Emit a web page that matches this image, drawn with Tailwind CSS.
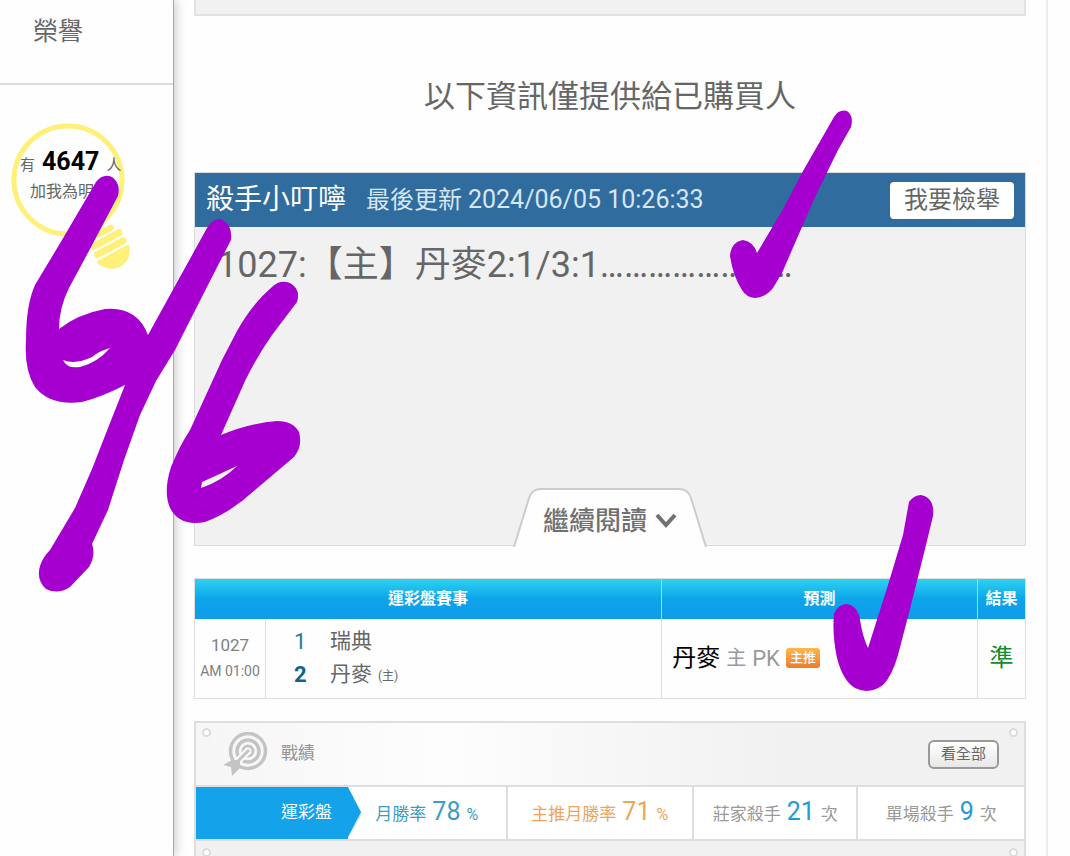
<!DOCTYPE html>
<html lang="zh-Hant">
<head>
    <meta charset="UTF-8">
    <meta name="viewport" content="width=device-width, initial-scale=1.0">
    <title>殺手小叮嚀</title>
    <script src="https://cdn.jsdelivr.net/npm/@tailwindcss/browser@4"></script>
</head>
<body class="relative flex h-screen overflow-hidden bg-[#fefefe] font-[Roboto,'Noto_Sans_CJK_TC',sans-serif] text-[#666]">
    <!-- Sidebar -->
    <aside class="z-10 w-[174px] shrink-0 border-r border-[#a8a8a8] bg-[#fefefe] shadow-[2px_0_10px_rgba(0,0,0,0.2)]">
        <a href="#honor" class="block border-b-2 border-[#dcdcdc] pt-3 pb-8 pl-[33px] text-[25px] leading-[39px]">榮譽</a>
        <div class="relative mt-[35px] ml-2 h-[152px] w-[124px]">
            <svg class="absolute inset-0" width="124" height="152" viewBox="8 120 124 152" fill="none" aria-hidden="true">
                <circle cx="68" cy="180" r="54" stroke="#fff07a" stroke-width="5"/>
                <g transform="rotate(-28 110 245)" fill="#fff07a">
                    <rect x="98" y="227" width="24" height="6" rx="3"/>
                    <rect x="92" y="235" width="35" height="7" rx="3"/>
                    <rect x="91" y="244" width="36" height="7" rx="3"/>
                    <path d="M92 253h33c2 0 2 2 1 4-3 7-9 12-17 12s-14-5-18-12c-1-2-1-4 1-4z"/>
                </g>
            </svg>
            <div class="relative pt-7 pl-3">
                <p class="flex items-baseline gap-1 text-[15px] leading-[28px]">有 <b class="px-[3px] text-[25px] text-black">4647</b> <span>人</span></p>
                <p class="pl-[10px] text-base leading-[26px]">加我為明燈</p>
            </div>
        </div>
    </aside>

    <!-- Main column -->
    <main class="mr-[22px] flex min-w-0 flex-1 flex-col border-r-2 border-[#ededed] px-5">
        <div class="h-4 shrink-0 border-2 border-t-0 border-[#e2e2e2] bg-[#f1f1f1]"></div>
        <h2 class="pt-14 text-center text-[31px] leading-[50px]">以下資訊僅提供給已購買人</h2>

        <!-- Paid tip -->
        <section class="relative mt-[50px] h-[374px] shrink-0 border border-[#dcdcdc] bg-[#f1f1f1]">
            <header class="flex h-[54px] items-center bg-[#306c9e] px-[11px]">
                <h3 class="text-[28px] text-white">殺手小叮嚀</h3>
                <span class="ml-5 text-2xl text-[#d6e6f5]">最後更新 <span class="text-[25px]">2024/06/05 10:26:33</span></span>
                <button type="button" class="ml-auto h-[37px] rounded-[4px] bg-white px-[14px] text-2xl">我要檢舉</button>
            </header>
            <p class="pt-3 pl-[22px] text-[36px] leading-[52px]">1027:【主】丹麥2:1/3:1……………………</p>
            <button type="button" class="absolute -bottom-[2px] left-1/2 flex h-[60px] w-[194px] -translate-x-1/2 items-center justify-center gap-2 text-[26px] font-medium text-[#707070]">
                <svg class="absolute inset-0" width="194" height="60" viewBox="0 0 194 60" aria-hidden="true">
                    <path d="M1 60L16 11Q19 2 28 2H166Q175 2 178 11L193 60" fill="#fefefe" stroke="#ccc" stroke-width="2"/>
                </svg>
                <span class="relative pt-2">繼續閱讀</span>
                <svg class="relative mt-2" width="22" height="16" viewBox="0 0 22 16" fill="none" stroke="#707070" stroke-width="4" aria-hidden="true"><path d="M2 2l9 10 9-10"/></svg>
            </button>
        </section>

        <!-- Prediction table -->
        <table class="mt-8 w-full shrink-0 table-fixed border-collapse border border-[#dedede]">
            <colgroup>
                <col class="w-[71px]">
                <col>
                <col class="w-[38%]">
                <col class="w-[48px]">
            </colgroup>
            <thead>
                <tr class="h-10 bg-linear-to-b from-[#2dd2f0] via-[#0da4ea] to-[#109bea] text-base text-white">
                    <th colspan="2" class="border-r border-[#9adcf7] font-bold">運彩盤賽事</th>
                    <th class="border-r border-[#9adcf7] font-bold">預測</th>
                    <th class="font-bold">結果</th>
                </tr>
            </thead>
            <tbody>
                <tr class="h-20">
                    <td class="border-r border-[#dedede] text-center text-[#808080]">
                        <p class="text-[17px] leading-[26px]">1027</p>
                        <p class="text-sm leading-[26px] whitespace-nowrap">AM 01:00</p>
                    </td>
                    <td class="border-r border-[#dedede] pt-[2px] pl-7 text-[21px] leading-[33px]">
                        <p class="flex"><span class="w-9 text-[22px] text-[#1b7d9c]">1</span>瑞典</p>
                        <p class="flex"><b class="w-9 text-[22px] text-[#0d6593]">2</b>丹麥<small class="pt-[2px] pl-[6px] text-xs leading-[33px]">(主)</small></p>
                    </td>
                    <td class="border-r border-[#dedede] pl-[10px]">
                        <div class="flex items-center gap-[6px] text-[22px] text-[#999]">
                            <span class="text-2xl text-black">丹麥</span>
                            <span class="text-xl">主</span>
                            <span>PK</span>
                            <span class="h-5 w-[34px] rounded-[3px] bg-linear-to-b from-[#ffb84d] to-[#ef7a27] text-center text-[13px] leading-[20px] font-medium text-white">主推</span>
                        </div>
                    </td>
                    <td class="text-center text-2xl text-[#168a30]">準</td>
                </tr>
            </tbody>
        </table>

        <!-- Records -->
        <section class="mt-[22px] flex min-h-0 flex-1 flex-col overflow-hidden border-2 border-b-0 border-[#dedede] bg-[#f1f1f1]">
            <header class="relative flex h-[62px] shrink-0 items-center bg-linear-to-r from-[#f6f6f6] via-[#fdfdfd] via-30% to-[#f1f1f1] to-70% pl-7">
                <i class="absolute top-[5px] left-[6px] size-[9px] rounded-full border-2 border-[#dcdcdc] bg-white"></i>
                <i class="absolute top-[5px] right-[6px] size-[9px] rounded-full border-2 border-[#dcdcdc] bg-white"></i>
                <svg width="44" height="44" viewBox="0 0 44 44" fill="none" stroke="#c4c4c4" aria-hidden="true">
                    <circle cx="24" cy="19" r="17.5" stroke-width="3.5"/>
                    <circle cx="24" cy="19" r="11" stroke-width="3.5"/>
                    <circle cx="24" cy="19" r="5" stroke-width="3"/>
                    <path d="M25 18L8 35" stroke="#fafafa" stroke-width="7"/>
                    <path d="M25 18L9 34" stroke-width="3"/>
                    <path d="M-1 33l9-5h8v8l-8 8-1-9z" fill="#c4c4c4" stroke="none"/>
                </svg>
                <h3 class="ml-[13px] text-[17px] text-[#929292]">戰績</h3>
                <button type="button" class="mr-[25px] ml-auto h-[29px] w-[71px] rounded-[6px] border-2 border-[#999] bg-linear-to-b from-white to-[#e8e8e8] text-[15px]">看全部</button>
            </header>
            <div class="grid shrink-0 grid-cols-[152px_160fr_187fr_165fr_166fr] border-y-2 border-[#dedede] bg-white text-[17px] leading-[50px] text-[#999]">
                <div class="relative bg-[#14a3ea] pr-4 text-right text-white">
                    運彩盤
                    <svg class="absolute top-0 left-full" width="14" height="50" viewBox="0 0 14 50" aria-hidden="true"><path d="M0 3l14 24L0 51z" fill="#cfe4f2"/><path d="M0 0l13 25L0 50z" fill="#14a3ea"/></svg>
                </div>
                <p class="flex items-baseline justify-center gap-[6px] border-r-2 border-[#dedede] text-[#3c9cc4]">月勝率<span class="text-[25px]">78</span><span class="text-base">%</span></p>
                <p class="flex items-baseline justify-center gap-[6px] border-r-2 border-[#dedede] text-[#eda55e]">主推月勝率<span class="text-[25px]">71</span><span class="text-base">%</span></p>
                <p class="flex items-baseline justify-center gap-[6px] border-r-2 border-[#dedede]">莊家殺手<span class="text-[25px] text-[#239bd1]">21</span><span>次</span></p>
                <p class="flex items-baseline justify-center gap-[6px]">單場殺手<span class="text-[25px] text-[#239bd1]">9</span><span>次</span></p>
            </div>
            <div class="relative min-h-0 flex-1 overflow-hidden">
                <i class="absolute top-[7px] left-[6px] size-[9px] rounded-full border-2 border-[#dcdcdc] bg-white"></i>
                <i class="absolute top-[7px] right-[6px] size-[9px] rounded-full border-2 border-[#dcdcdc] bg-white"></i>
            </div>
        </section>
    </main>

    <!-- Marker strokes -->
    <svg class="pointer-events-none absolute top-0 left-0 z-20" width="1070" height="856" viewBox="0 0 1070 856" fill="#a500cf" fill-rule="evenodd" aria-hidden="true">
        <path d="M96 182Q103 173 112 177Q121 183 118 196L90 249L69 288Q59 308 59 329Q78 314 105 309Q137 306 148 335L158 348L127 384Q102 397 82 402Q50 406 35 387Q24 370 26 340Q26 305 35 285L62 240ZM63 360Q67 369 80 367Q97 363 110 348Q99 351 92 357Q75 365 63 360Z"/>
        <path d="M207 228Q212 219 221 219Q233 225 231 240L211 279L175 350L156 381L140 415L124 460L108 510L92 544Q96 555 89 567L70 587Q58 595 46 589Q36 580 40 566Q43 557 50 550L75 508L92 469L110 423L125 385L148 335Z"/>
        <path d="M272 287Q280 279 290 283Q301 289 297 302L272 335Q256 358 245 381L221 435Q250 423 277 421Q293 421 299 432Q303 446 294 457L255 490Q230 513 205 522Q180 527 170 508Q163 492 171 467Q180 445 190 430L222 360L237 331Q252 304 272 287ZM202 482L237 466Q222 481 201 488Z"/>
        <path d="M834 117Q839 109 847 111Q854 116 851 127L838 150L815 197L795 243L782 273L773 288Q766 297 755 298Q746 297 742 290Q733 276 730 256Q731 242 743 240Q754 242 757 253L782 211L803 171Z"/>
        <path d="M909 502Q914 495 921 495Q935 498 933 516L925 549L910 609L898 655Q892 676 883 685Q869 695 855 688Q843 681 837 658Q832 634 834 614Q838 604 847 604Q858 606 860 620Q863 638 868 648L888 585L903 535Z"/>
    </svg>
</body>
</html>
